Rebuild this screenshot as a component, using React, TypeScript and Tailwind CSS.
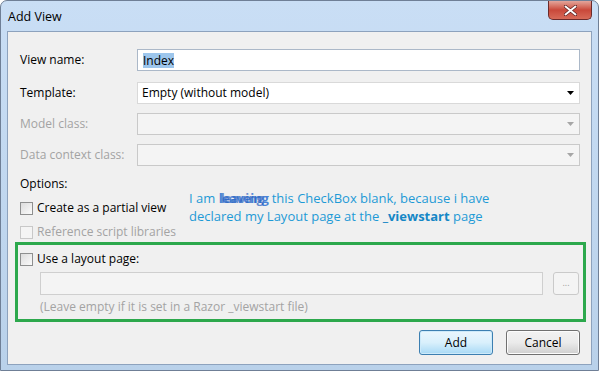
import React from 'react';

const font = { fontFamily: '"Open Sans", "Noto Sans", sans-serif' };

const Arrow = ({ disabled }: { disabled?: boolean }) => (
    <svg width="7" height="4" viewBox="0 0 7 4" className="mr-[5px]">
        <path d="M0 0 H7 L3.5 4 Z" fill={disabled ? '#a6a6a6' : '#000'} />
    </svg>
);

const Checkbox = ({ disabled }: { disabled?: boolean }) => (
    <span
        className={
            'inline-block w-[13px] h-[13px] border shrink-0 ' +
            (disabled
                ? 'border-[#c8c8c8] bg-[#f4f4f4]'
                : 'border-[#8e8f8f] bg-gradient-to-br from-[#dcdcdc] to-[#fbfbfb]')
        }
    />
);

const App: React.FC = () => {
    return (
        <div style={font} className="w-[599px] h-[371px] flex flex-col bg-gradient-to-b from-[#c9def5] to-[#b9d1ea] rounded-t-[7px] border border-[#6f7f96] text-[12px] text-black overflow-hidden">
            {/* title bar */}
            <div className="h-[30px] flex items-start justify-between shrink-0">
                <span className="ml-[7px] mt-[7px] text-[12.5px] text-black">Add View</span>
                <div className="mr-[6px] w-[44px] h-[19px] rounded-b-[5px] border border-t-0 border-[#6b2a2a] bg-gradient-to-b from-[#e3a59b] via-[#c9483a] to-[#d76a58] flex items-center justify-center">
                    <svg width="13" height="11" viewBox="0 0 13 11">
                        <path d="M1.5 1.5 L11.5 9.5 M11.5 1.5 L1.5 9.5" stroke="#5a2020" strokeWidth="3.4" strokeLinecap="round" />
                        <path d="M1.5 1.5 L11.5 9.5 M11.5 1.5 L1.5 9.5" stroke="#fff" strokeWidth="2" strokeLinecap="round" />
                    </svg>
                </div>
            </div>

            {/* client area */}
            <div className="flex-1 mx-[6px] mb-[5px] border border-[#8da2bd] bg-[#f0f0f0] flex flex-col pl-[12px] pr-[11px] pt-[17px]">
                <div className="flex items-center h-[22px]">
                    <span className="w-[117px]">View name:</span>
                    <div className="flex-1 h-[22px] bg-white border border-[#abb8c8] flex items-center pl-[5px]">
                        <span className="bg-[#9dc6ec] leading-[15px]">Index</span>
                    </div>
                </div>
                <div className="flex items-center h-[22px] mt-[11px]">
                    <span className="w-[117px]">Template:</span>
                    <div className="flex-1 h-[22px] bg-white border border-[#d9d9d9] flex items-center justify-between pl-[4px]">
                        <span>Empty (without model)</span>
                        <Arrow />
                    </div>
                </div>
                <div className="flex items-center h-[22px] mt-[9px]">
                    <span className="w-[117px] text-[#a3a3a3]">Model class:</span>
                    <div className="flex-1 h-[22px] bg-[#f4f4f4] border border-[#c9c9c9] flex items-center justify-end">
                        <Arrow disabled />
                    </div>
                </div>
                <div className="flex items-center h-[22px] mt-[9px]">
                    <span className="w-[117px] text-[#a3a3a3]">Data context class:</span>
                    <div className="flex-1 h-[22px] bg-[#f4f4f4] border border-[#c9c9c9] flex items-center justify-end">
                        <Arrow disabled />
                    </div>
                </div>

                <div className="flex mt-[10px]">
                    <div className="w-[165px] flex flex-col">
                        <span className="leading-[16px]">Options:</span>
                        <div className="flex items-center gap-[4px] mt-[7px]">
                            <Checkbox />
                            <span>Create as a partial view</span>
                        </div>
                        <div className="flex items-center gap-[4px] mt-[6px] text-[#a3a3a3]">
                            <Checkbox disabled />
                            <span>Reference script libraries</span>
                        </div>
                    </div>
                    <div className="ml-[4px] mt-[13px] text-[13px] leading-[18px] text-[#1e9ad6]">
                        <div>
                            I am{' '}
                            <span className="inline-grid font-bold tracking-[-0.6px]">
                                <span className="col-start-1 row-start-1 text-[#4a83d6]">leaveing</span>
                                <span className="col-start-1 row-start-1 text-[#2a62c0] opacity-70 ml-[2px]">leaving</span>
                            </span>{' '}
                            this CheckBox blank, because i have
                        </div>
                        <div>
                            declared my Layout page at the <span className="font-bold text-[#1587c6]">_viewstart</span> page
                        </div>
                    </div>
                </div>

                {/* highlighted layout group */}
                <div className="mt-[1px] -ml-[5px] mr-[-6px] border-[3px] border-[#2ca84c] h-[80px] flex flex-col pl-[2px] pr-[4px] pt-[5px]">
                    <div className="flex items-center gap-[4px]">
                        <Checkbox />
                        <span>Use a layout page:</span>
                    </div>
                    <div className="flex items-center mt-[4px] ml-[20px]">
                        <div className="flex-1 h-[23px] bg-[#f4f4f4] border border-[#cfcfcf]" />
                        <div className="ml-[10px] w-[26px] h-[23px] rounded-[3px] border border-[#cacaca] bg-[#f4f4f4] flex items-center justify-center text-[9px] text-[#a0a0a0] leading-none pb-[3px]">
                            ...
                        </div>
                    </div>
                    <span className="ml-[20px] mt-[3px] text-[#a3a3a3]">(Leave empty if it is set in a Razor _viewstart file)</span>
                </div>

                <div className="flex justify-end gap-[13px] mt-[8px]">
                    <button className="w-[74px] h-[25px] rounded-[3px] border border-[#3c7fb1] bg-gradient-to-b from-[#eaf6fd] via-[#d9f0fc] to-[#a7d9f5] shadow-[inset_0_0_0_1px_#cdeafa]">
                        Add
                    </button>
                    <button className="w-[74px] h-[25px] rounded-[3px] border border-[#707070] bg-gradient-to-b from-[#f2f2f2] via-[#ebebeb] to-[#cfcfcf] shadow-[inset_0_0_0_1px_#fcfcfc]">
                        Cancel
                    </button>
                </div>
            </div>
        </div>
    );
};

export default App;
